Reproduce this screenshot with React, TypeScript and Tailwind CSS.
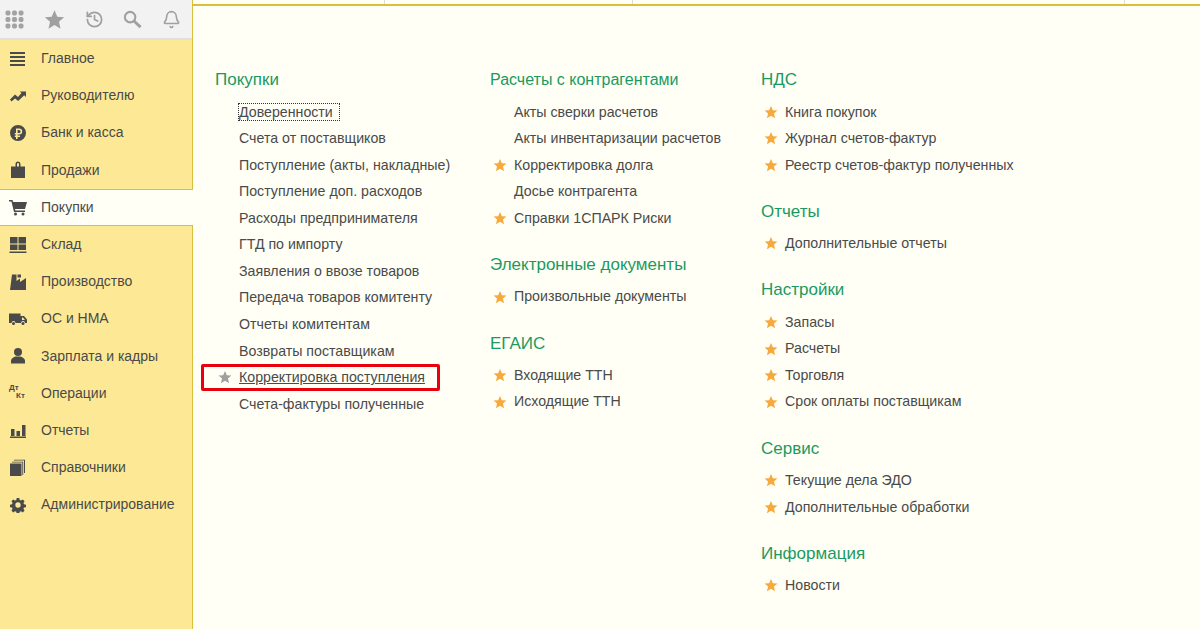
import React from 'react';
import { History, Bell } from 'lucide-react';

const iconCls = 'w-[18px] h-[18px] fill-[#4a4a4a]';

const icons: Record<string, React.ReactNode> = {
  menu: (
    <svg viewBox="0 0 18 18" className={iconCls}>
      <path d="M1 2h15v2H1zM1 6h15v2H1zM1 10h15v2H1zM1 14h15v2H1z" />
    </svg>
  ),
  trend: (
    <svg viewBox="0 0 18 18" className={iconCls}>
      <path d="M1 12.500l5-5 3 2.500 3.500-4-1.800-1.500H17v5.500l-1.800-1.700L9.200 14 6 11.500 2.500 14.500z" />
    </svg>
  ),
  ruble: (
    <svg viewBox="0 0 18 18" className={iconCls}>
      <path fillRule="evenodd" d="M9 1a8 8 0 1 0 0 16A8 8 0 0 0 9 1zM7 4.500h3.200a3 3 0 0 1 0 6H8.600v1h2.400V13H8.600v2H7v-2H5.800v-1.500H7v-1H5.800V9H7zM8.600 6v3h1.500a1.500 1.500 0 0 0 0-3z" />
    </svg>
  ),
  bag: (
    <svg viewBox="0 0 18 18" className={iconCls}>
      <path fillRule="evenodd" d="M6.500 5.500V3a2.500 2.500 0 0 1 5 0v2.500H16V17H2V5.500zm1.500 0h2V3a1 1 0 0 0-2 0z" />
    </svg>
  ),
  cart: (
    <svg viewBox="0 0 18 18" className={iconCls}>
      <path d="M0 2h3.500l.6 2H18l-2 7H6l.4 1.500H16V14H5L2.400 3.500H0z" />
      <circle cx="6.500" cy="16" r="1.500" />
      <circle cx="14" cy="16" r="1.500" />
    </svg>
  ),
  stock: (
    <svg viewBox="0 0 18 18" className={iconCls}>
      <path d="M1 1h7.500v6.500H1zM9.500 1H17v6.500H9.500zM1 8.500h7.500v5.500H1zM9.500 8.500H17v5.500H9.500zM0.500 15.500h17V17H0.500z" />
    </svg>
  ),
  factory: (
    <svg viewBox="0 0 18 18" className={iconCls}>
      <path d="M3 1.500h4.500V8L11 5.500V9l6-4v12H1z" />
      <path d="M8.500 1.500h3.500v3h-3.500z" />
    </svg>
  ),
  truck: (
    <svg viewBox="0 0 18 18" className={iconCls}>
      <path fillRule="evenodd" d="M0 3.500h11.500V6H15l3 3.500V13h-2a2 2 0 0 0-4 0H6.500a2 2 0 0 0-4 0H0zM13 7.500V10h3l-2-2.500z" />
      <circle cx="4.500" cy="13.500" r="1.500" />
      <circle cx="14" cy="13.500" r="1.500" />
    </svg>
  ),
  person: (
    <svg viewBox="0 0 18 18" className={iconCls}>
      <circle cx="9" cy="5" r="4" />
      <path d="M2 16.500v-2.500c0-2.500 3-4 4.500-4.500h5c1.500.5 4.500 2 4.500 4.500v2.500z" />
    </svg>
  ),
  chart: (
    <svg viewBox="0 0 18 18" className={iconCls}>
      <path d="M2 8h3.500v7H2zM7.500 10h3.500v5H7.500zM13 4h3.500v11H13zM1 15.500h16V17H1z" />
    </svg>
  ),
  books: (
    <svg viewBox="0 0 18 18" className={iconCls}>
      <path d="M1 4.500h11.500V17H1z" />
      <path d="M13.300 3.500H3V2.700h11.200V16h-.9zM15 1.500H5V.7h11V14h-1z" />
    </svg>
  ),
  gear: (
    <svg viewBox="0 0 18 18" className="w-[16px] h-[16px] ml-px fill-[#4a4a4a]">
      <path fillRule="evenodd" d="M7.500 1h3l.4 2.300 1.500.7 2-1.300 2 2-1.300 2 .7 1.500 2.200.4v2.800l-2.200.4-.7 1.500 1.300 2-2 2-2-1.300-1.500.7-.4 2.300h-3l-.4-2.300-1.500-.7-2 1.300-2-2 1.300-2-.7-1.500-2.200-.4V8.600l2.200-.4.7-1.500-1.300-2 2-2 2 1.300 1.500-.7zM9 6a3 3 0 1 0 0 6 3 3 0 0 0 0-6z" />
    </svg>
  ),
};

const nav = [
  { label: 'Главное', icon: 'menu' },
  { label: 'Руководителю', icon: 'trend' },
  { label: 'Банк и касса', icon: 'ruble' },
  { label: 'Продажи', icon: 'bag' },
  { label: 'Покупки', icon: 'cart', active: true },
  { label: 'Склад', icon: 'stock' },
  { label: 'Производство', icon: 'factory' },
  { label: 'ОС и НМА', icon: 'truck' },
  { label: 'Зарплата и кадры', icon: 'person' },
  { label: 'Операции', icon: 'dtkt' },
  { label: 'Отчеты', icon: 'chart' },
  { label: 'Справочники', icon: 'books' },
  { label: 'Администрирование', icon: 'gear' },
];

type Item = { t: string; star?: boolean };
type Group = { title: string; items: Item[] };

const s = (t: string): Item => ({ t, star: true });
const p = (t: string): Item => ({ t });

const col1Items: Item[] = [
  p('Счета от поставщиков'),
  p('Поступление (акты, накладные)'),
  p('Поступление доп. расходов'),
  p('Расходы предпринимателя'),
  p('ГТД по импорту'),
  p('Заявления о ввозе товаров'),
  p('Передача товаров комитенту'),
  p('Отчеты комитентам'),
  p('Возвраты поставщикам'),
];

const col2: Group[] = [
  {
    title: 'Расчеты с контрагентами',
    items: [p('Акты сверки расчетов'), p('Акты инвентаризации расчетов'), s('Корректировка долга'), p('Досье контрагента'), s('Справки 1СПАРК Риски')],
  },
  { title: 'Электронные документы', items: [s('Произвольные документы')] },
  { title: 'ЕГАИС', items: [s('Входящие ТТН'), s('Исходящие ТТН')] },
];

const col3: Group[] = [
  { title: 'НДС', items: [s('Книга покупок'), s('Журнал счетов-фактур'), s('Реестр счетов-фактур полученных')] },
  { title: 'Отчеты', items: [s('Дополнительные отчеты')] },
  { title: 'Настройки', items: [s('Запасы'), s('Расчеты'), s('Торговля'), s('Срок оплаты поставщикам')] },
  { title: 'Сервис', items: [s('Текущие дела ЭДО'), s('Дополнительные обработки')] },
  { title: 'Информация', items: [s('Новости')] },
];

const starPath = 'M12 1.500l3.200 7.300 7.800.7-5.900 5.200 1.800 7.800L12 18.400l-6.900 4.100 1.800-7.800L1 9.500l7.800-.7z';

function StarIcon({ gray }: { gray?: boolean }) {
  return (
    <svg viewBox="0 0 24 24" className={`w-[14px] h-[14px] ml-[3px] -mt-px ${gray ? 'fill-[#a0a0a0]' : 'fill-[#f7a93c]'}`}>
      <path d={starPath} />
    </svg>
  );
}

function Heading({ title }: { title: string }) {
  // the long heading runs narrower than the rest in the picture
  const size = title === 'Расчеты с контрагентами' ? 'text-[16px]' : 'text-[17px]';
  return <div className={`h-[20px] flex items-center ${size} text-[#1a9a62] mb-[9px]`}>{title}</div>;
}

function Row({ item }: { item: Item }) {
  return (
    <div className="h-[26.55px] flex items-center">
      <span className="w-6 flex-none flex">{item.star && <StarIcon />}</span>
      <span>{item.t}</span>
    </div>
  );
}

function Groups({ groups }: { groups: Group[] }) {
  return (
    <div className="flex flex-col gap-[23px]">
      {groups.map((g) => (
        <div key={g.title}>
          <Heading title={g.title} />
          {g.items.map((i) => (
            <Row key={i.t} item={i} />
          ))}
        </div>
      ))}
    </div>
  );
}

export default function App() {
  return (
    <div className="w-[1200px] h-[629px] overflow-hidden flex bg-[#fffff5] text-[14.2px] text-[#4a4a4a] font-['Liberation_Sans',Arial,sans-serif]">
      <aside className="w-[193px] flex-none flex flex-col bg-[#fde995] border-r border-[#d8c03c] text-[14px]">
        <div className="h-[40px] flex-none flex items-center justify-between pl-[5px] pr-[11px] bg-[#f2f2f2] border-b-2 border-[#e0e0e0]">
          <svg viewBox="0 0 18 18" className="w-[19px] h-[19px] fill-[#a3a3a3]">
            <rect x="0.500" y="0.500" width="4.600" height="4.600" rx="1.600" />
            <rect x="6.700" y="0.500" width="4.600" height="4.600" rx="1.600" />
            <rect x="12.900" y="0.500" width="4.600" height="4.600" rx="1.600" />
            <rect x="0.500" y="6.700" width="4.600" height="4.600" rx="1.600" />
            <rect x="6.700" y="6.700" width="4.600" height="4.600" rx="1.600" />
            <rect x="12.900" y="6.700" width="4.600" height="4.600" rx="1.600" />
            <rect x="0.500" y="12.900" width="4.600" height="4.600" rx="1.600" />
            <rect x="6.700" y="12.900" width="4.600" height="4.600" rx="1.600" />
            <rect x="12.900" y="12.900" width="4.600" height="4.600" rx="1.600" />
          </svg>
          <svg viewBox="0 0 24 24" className="w-[21px] h-[21px] fill-[#a0a0a0]">
            <path d={starPath} />
          </svg>
          <History className="w-[19px] h-[19px] text-[#a0a0a0]" strokeWidth={2.2} />
          <svg viewBox="0 0 20 20" className="w-[19px] h-[19px] fill-none stroke-[#a0a0a0]">
            <circle cx="7.500" cy="7.500" r="5.500" strokeWidth="2.200" />
            <path d="M11.500 11.500l7 6.500" strokeWidth="3" />
          </svg>
          <Bell className="w-[19px] h-[19px] text-[#a0a0a0]" strokeWidth={2} />
        </div>
        {nav.map((n) => (
          <div
            key={n.label}
            className={`h-[37.200px] flex-none flex items-center ${
              n.active ? 'bg-[#fffff5] border-y border-[#d8c03c] -mr-px' : ''
            }`}
          >
            <span className="w-[41px] pl-[9px] flex-none flex">
              {n.icon === 'dtkt' ? (
                <span className="w-[18px] h-[18px] flex flex-col text-[8px] leading-[8px] font-bold text-[#4a4a4a]">
                  <span>Дт</span>
                  <span className="pl-[7px]">Кт</span>
                </span>
              ) : (
                icons[n.icon]
              )}
            </span>
            <span>{n.label}</span>
          </div>
        ))}
      </aside>

      <main className="flex-1 relative">
        <div className="h-[6px] flex border-b-2 border-[#d8c03c] bg-[#fffff5]">
          <div className="w-[192px] border-r border-[#dcdcdc]" />
          <div className="w-[248px] border-r border-[#dcdcdc]" />
          <div className="w-[492px] border-r border-[#dcdcdc]" />
        </div>
        <div className="flex pt-[64px] pl-[22px]">
          <div className="w-[275px]">
            <Heading title="Покупки" />
            <div className="h-[26.550px] flex items-center pl-[23px]">
              <span className="border border-dotted border-[#333] pr-[6px] leading-[16px]">Доверенности</span>
            </div>
            {col1Items.map((i) => (
              <Row key={i.t} item={i} />
            ))}
            <div className="h-[26.550px] flex items-center relative">
              <span className="w-6 flex-none flex">
                <StarIcon gray />
              </span>
              <span className="underline">Корректировка поступления</span>
              <div className="absolute left-[-14px] top-0 w-[239px] h-[27px] border-[3px] border-[#e8000d] rounded-[2px]" />
            </div>
            <Row item={p('Счета-фактуры полученные')} />
          </div>
          <div className="w-[271px]">
            <Groups groups={col2} />
          </div>
          <div>
            <Groups groups={col3} />
          </div>
        </div>
      </main>
    </div>
  );
}
